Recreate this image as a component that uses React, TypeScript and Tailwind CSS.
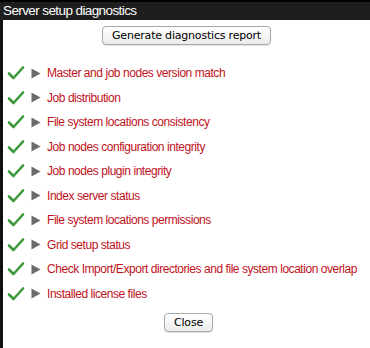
import React from "react";

const items = [
  "Master and job nodes version match",
  "Job distribution",
  "File system locations consistency",
  "Job nodes configuration integrity",
  "Job nodes plugin integrity",
  "Index server status",
  "File system locations permissions",
  "Grid setup status",
  "Check Import/Export directories and file system location overlap",
  "Installed license files",
];

function Check() {
  return (
    <svg width="18" height="16" viewBox="0 0 18 16" className="shrink-0">
      <path d="M2 8.5 L6.5 13 L16 2.5" fill="none" stroke="#3c9a3c" strokeWidth="2.6" strokeLinecap="round" strokeLinejoin="round" />
    </svg>
  );
}

function Tri() {
  return (
    <svg width="10" height="11" viewBox="0 0 10 11" className="shrink-0 ml-[6px] mr-[6px]">
      <path d="M0.5 0.5 L9.5 5.5 L0.5 10.5 Z" fill="#6b6b6b" />
    </svg>
  );
}

export default function App() {
  return (
    <div className="w-[370px] h-[348px] bg-white flex flex-col overflow-hidden" style={{ fontFamily: '"Liberation Sans", Arial, sans-serif' }}>
      <div className="h-[20px] bg-[#1e1e1e] border-t-2 border-black text-white text-[13.5px] tracking-[-0.6px] leading-[17px] pl-[3px] shrink-0">
        Server setup diagnostics
      </div>
      <div className="flex-1 border-l-[3px] border-[#111] flex flex-col">
        <div className="flex justify-center pt-[6px]">
          <button className="h-[19px] px-[9px] rounded-[4px] border border-[#a8a8a8] bg-gradient-to-b from-white to-[#ececec] text-[11px] tracking-[-0.2px] leading-[17px] text-black shadow-[0_1px_1px_rgba(0,0,0,0.12)]" style={{ fontFamily: '"DejaVu Sans", sans-serif' }}>
            Generate diagnostics report
          </button>
        </div>
        <div className="flex flex-col pt-[16px] pl-[4px]">
          {items.map((t) => (
            <div key={t} className="h-[24.5px] flex items-center">
              <Check />
              <Tri />
              <span className="text-[12px] tracking-[-0.45px] text-[#c0121c] leading-none whitespace-nowrap">{t}</span>
            </div>
          ))}
        </div>
        <div className="flex justify-center pt-[7px] pl-[4px]">
          <button className="h-[19px] px-[9px] rounded-[4px] border border-[#a8a8a8] bg-gradient-to-b from-white to-[#ececec] text-[11px] tracking-[-0.2px] leading-[17px] text-black shadow-[0_1px_1px_rgba(0,0,0,0.12)]" style={{ fontFamily: '"DejaVu Sans", sans-serif' }}>
            Close
          </button>
        </div>
      </div>
    </div>
  );
}
